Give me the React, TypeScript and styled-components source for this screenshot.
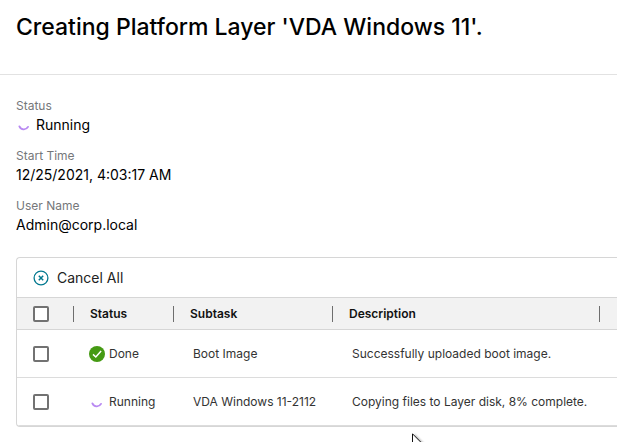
import React from 'react';
import styled, { createGlobalStyle } from 'styled-components';

const GlobalStyle = createGlobalStyle`
  *, *::before, *::after { box-sizing: border-box; }
  body {
    margin: 0;
    background: #fff;
    color: #000;
    font-family: Inter, "Open Sans", sans-serif;
    font-size: 14px;
  }
`;

const Header = styled.header`
  padding: 11px 16px 31px;
  border-bottom: 1px solid #e2e2e2;
`;

const Title = styled.h1`
  margin: 0;
  font-size: 23px;
  line-height: 32px;
  font-weight: 500;
  white-space: nowrap;
`;

const Main = styled.main`
  padding: 21px 0 15px 16px;
`;

const Details = styled.dl`
  display: flex;
  flex-direction: column;
  gap: 12px;
  margin: 0 0 23px;
`;

const Detail = styled.div`
  display: flex;
  flex-direction: column;
`;

const Term = styled.dt`
  font-size: 12px;
  line-height: 20px;
  color: #75777a;
`;

const Value = styled.dd`
  display: flex;
  align-items: center;
  gap: 4px;
  margin: 0;
  font-size: 14px;
  line-height: 18px;
`;

const Panel = styled.section`
  border: 1px solid #d6d6d6;
  border-right: 0;
  border-radius: 4px 0 0 4px;
  overflow: hidden;
`;

const Toolbar = styled.div`
  display: flex;
  align-items: center;
  height: 39px;
  padding: 0 16px;
`;

const ToolButton = styled.button`
  display: flex;
  align-items: center;
  gap: 8px;
  padding: 0;
  border: 0;
  background: none;
  color: #222;
  font: inherit;
  line-height: 20px;
  cursor: pointer;
`;

const Table = styled.table`
  width: 100%;
  table-layout: fixed;
  border-collapse: separate;
  border-spacing: 0;
  font-size: 12px;
  line-height: 16px;
  white-space: nowrap;
`;

const Column = styled.col<{ $width?: number }>`
  width: ${({ $width }) => ($width ? `${$width}px` : 'auto')};
`;

const HeadCell = styled.th`
  height: 33px;
  padding: 0 0 0 16px;
  border: solid #d6d6d6;
  border-width: 1px 0;
  background: #f2f2f2;
  color: #111;
  font-weight: 600;
  text-align: left;
`;

const HeadContent = styled.div`
  display: flex;
  align-items: center;
  justify-content: space-between;
  height: 16px;
  border-right: 1px solid #6e6e6e;
`;

const Cell = styled.td<{ $inset?: number }>`
  height: 48px;
  padding: 0 0 0 ${({ $inset = 19 }) => $inset}px;
  border-bottom: 1px solid #dcdcdc;
  color: #333;
`;

const StatusLine = styled.div`
  display: flex;
  align-items: center;
  gap: 4px;
`;

const Checkbox = styled.input.attrs({ type: 'checkbox' })`
  display: block;
  appearance: none;
  width: 16px;
  height: 16px;
  margin: 0;
  border: 2px solid #727272;
  border-radius: 2px;
  background: #fff;

  &:checked { background: #02788f; }
`;

const Glyph = styled.svg`
  display: block;
  flex: none;
`;

const Pointer = styled.svg`
  position: fixed;
  left: 412px;
  top: 433px;
  pointer-events: none;
  filter: drop-shadow(2px 1px 1px rgba(0, 0, 0, 0.35));
`;

const Spinner = () => (
  <Glyph width="16" height="16" viewBox="0 0 16 16" fill="none" aria-hidden="true">
    <path d="M3.4 9.4A4.8 4.8 0 0 0 12 9.9" stroke="#b98af2" strokeWidth="1.9" strokeLinecap="round" />
  </Glyph>
);

const DoneIcon = () => (
  <Glyph width="16" height="16" viewBox="0 0 16 16" fill="none" aria-hidden="true">
    <circle cx="8" cy="8" r="8" fill="#459a13" />
    <path d="M4 8.4L6.8 11L12.1 5" stroke="#fff" strokeWidth="1.5" />
  </Glyph>
);

const CancelIcon = () => (
  <Glyph width="16" height="16" viewBox="0 0 16 16" fill="none" stroke="#02788f" aria-hidden="true">
    <circle cx="8" cy="8" r="6.9" strokeWidth="1.3" />
    <path d="M5.8 5.8L10.2 10.2M10.2 5.8L5.8 10.2" strokeWidth="1.5" />
  </Glyph>
);

const tasks = [
  { done: true, status: 'Done', name: 'Boot Image', description: 'Successfully uploaded boot image.' },
  { done: false, status: 'Running', name: 'VDA Windows 11-2112', description: 'Copying files to Layer disk, 8% complete.' },
];

export default function App() {
  return (
    <>
      <GlobalStyle />
      <Header>
        <Title>Creating Platform Layer 'VDA Windows 11'.</Title>
      </Header>
      <Main>
        <Details>
          <Detail>
            <Term>Status</Term>
            <Value><Spinner />Running</Value>
          </Detail>
          <Detail>
            <Term>Start Time</Term>
            <Value>12/25/2021, 4:03:17 AM</Value>
          </Detail>
          <Detail>
            <Term>User Name</Term>
            <Value>Admin@corp.local</Value>
          </Detail>
        </Details>
        <Panel>
          <Toolbar>
            <ToolButton type="button"><CancelIcon />Cancel All</ToolButton>
          </Toolbar>
          <Table>
            <colgroup>
              <Column $width={57} />
              <Column $width={100} />
              <Column $width={159} />
              <Column $width={267} />
              <Column />
            </colgroup>
            <thead>
              <tr>
                <HeadCell scope="col">
                  <HeadContent><Checkbox aria-label="Select all subtasks" /></HeadContent>
                </HeadCell>
                <HeadCell scope="col"><HeadContent>Status</HeadContent></HeadCell>
                <HeadCell scope="col"><HeadContent>Subtask</HeadContent></HeadCell>
                <HeadCell scope="col"><HeadContent>Description</HeadContent></HeadCell>
                <HeadCell as="td" />
              </tr>
            </thead>
            <tbody>
              {tasks.map((task) => (
                <tr key={task.name}>
                  <Cell $inset={16}><Checkbox aria-label={`Select ${task.name}`} /></Cell>
                  <Cell $inset={15}>
                    <StatusLine>
                      {task.done ? <DoneIcon /> : <Spinner />}
                      {task.status}
                    </StatusLine>
                  </Cell>
                  <Cell>{task.name}</Cell>
                  <Cell>{task.description}</Cell>
                  <Cell />
                </tr>
              ))}
            </tbody>
          </Table>
        </Panel>
      </Main>
      <Pointer width="14" height="20" viewBox="0 0 14 20" aria-hidden="true">
        <path d="M0.5 0.8V16.5L4.2 13L6.8 19L9 18L6.5 12.2H11.8Z" fill="#fff" stroke="#111" />
      </Pointer>
    </>
  );
}
